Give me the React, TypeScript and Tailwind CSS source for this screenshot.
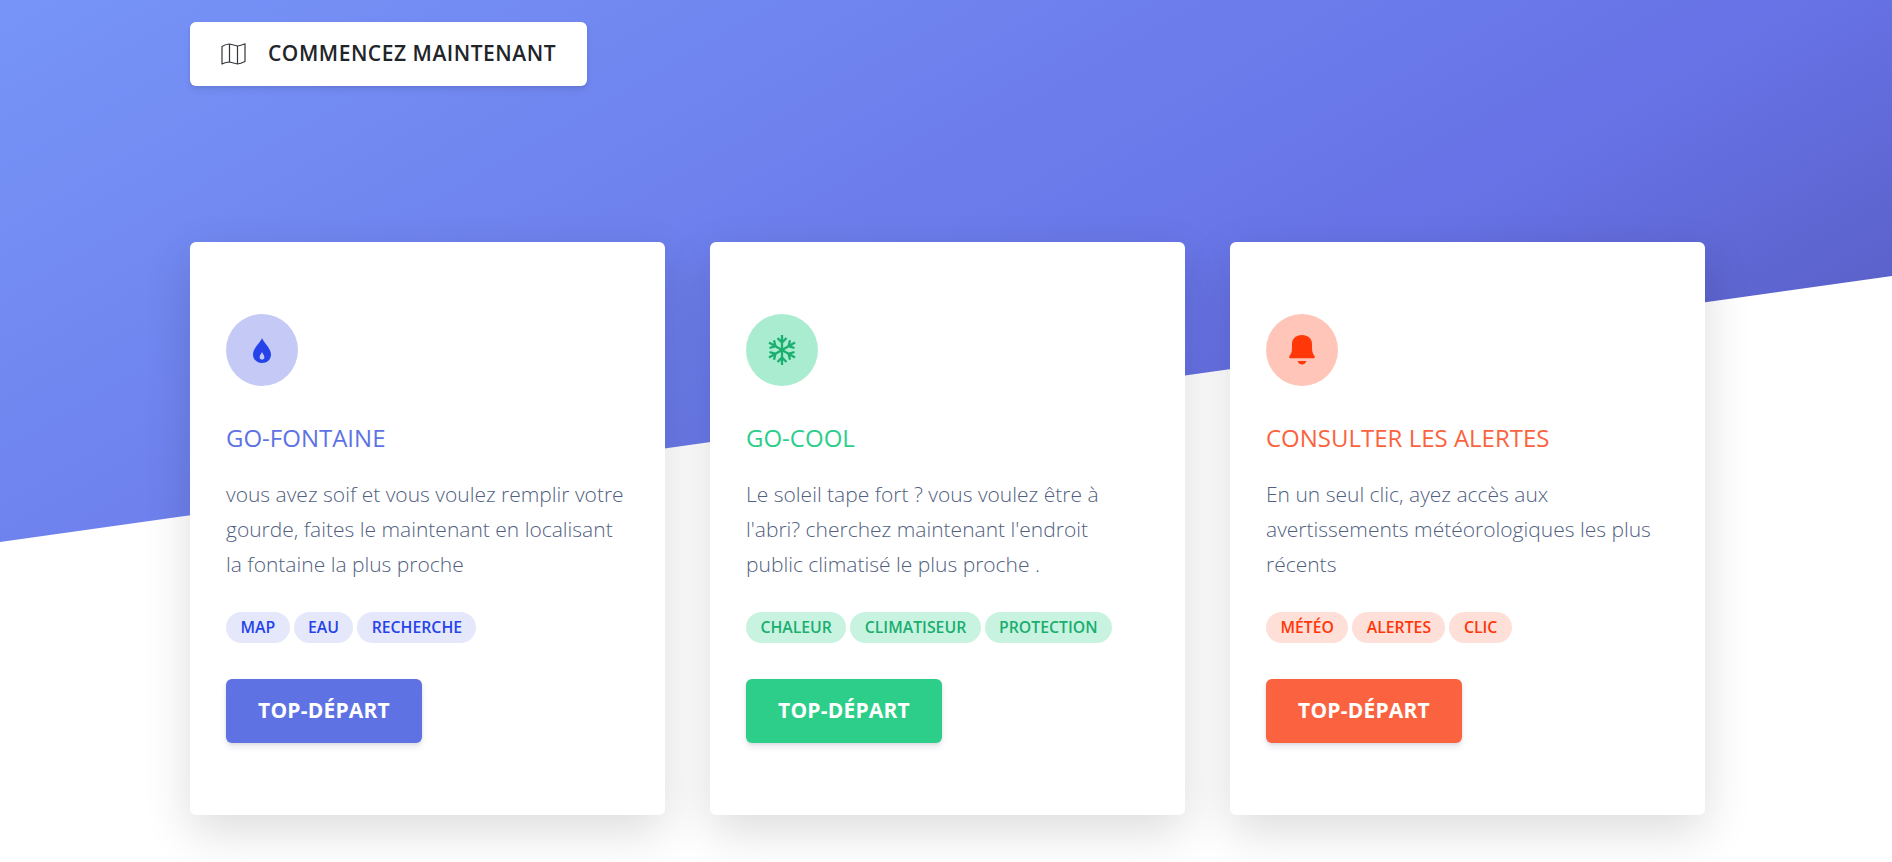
const cards = [
  {
    title: "GO-FONTAINE",
    text: "vous avez soif et vous voulez remplir votre gourde, faites le maintenant en localisant la fontaine la plus proche",
    tags: ["MAP", "EAU", "RECHERCHE"],
    titleClass: "text-[#5e72e4]",
    iconClass: "bg-[#c4caf5] text-[#2643e9]",
    tagClass: "bg-[#e5e8fb] text-[#2643e9]",
    buttonClass: "bg-[#5e72e4]",
    icon: <DropIcon />,
  },
  {
    title: "GO-COOL",
    text: "Le soleil tape fort ? vous voulez être à l'abri? cherchez maintenant l'endroit public climatisé le plus proche .",
    tags: ["CHALEUR", "CLIMATISEUR", "PROTECTION"],
    titleClass: "text-[#2dce89]",
    iconClass: "bg-[#aaecd0] text-[#1aae6f]",
    tagClass: "bg-[#c9f3e1] text-[#1aae6f]",
    buttonClass: "bg-[#2dce89]",
    icon: <SnowIcon />,
  },
  {
    title: "CONSULTER LES ALERTES",
    text: "En un seul clic, ayez accès aux avertissements météorologiques les plus récents",
    tags: ["MÉTÉO", "ALERTES", "CLIC"],
    titleClass: "text-[#fb6340]",
    iconClass: "bg-[#fec5b8] text-[#ff3709]",
    tagClass: "bg-[#fee0d9] text-[#ff3709]",
    buttonClass: "bg-[#fb6340]",
    icon: <BellIcon />,
  },
];

function MapIcon() {
  return (
    <svg width="25" height="22" viewBox="0 0 25 22" fill="none" stroke="#32363b" strokeWidth="1.2" strokeLinejoin="round">
      <path d="M1 3.5 C4 1.5 6 1 8.5 1 L16.5 3 C19 3 21 2 24 .8 V18.5 C21 20 19 20.8 16.5 21 L8.5 19 C6 19 4 19.5 1 21 Z" />
      <path d="M8.5 1 V19 M16.5 3 V21" />
    </svg>
  );
}

function DropIcon() {
  return (
    <svg width="18" height="25" viewBox="0 0 18 25">
      <path
        fillRule="evenodd"
        fill="currentColor"
        d="M9 0 C10 4 18 10 18 16.5 C18 21.5 14 25 9 25 C4 25 0 21.5 0 16.5 C0 10 8 4 9 0 Z M9 14 C8 16 6.6 17.5 6.6 19.2 C6.6 20.6 7.7 21.6 9 21.6 C10.3 21.6 11.4 20.6 11.4 19.2 C11.4 17.5 10 16 9 14 Z"
      />
    </svg>
  );
}

function SnowIcon() {
  return (
    <svg width="28" height="30" viewBox="0 0 28 30" fill="none" stroke="currentColor" strokeWidth="2.3">
      <path d="M14 15 V0 M9.5 3 L14 7.5 L18.5 3" />
      <path d="M14 15 V30 M9.5 27 L14 22.5 L18.5 27" />
      <path d="M14 15 L1 7.5 M1.5 13 L7.5 11.2 L6 5.2" />
      <path d="M14 15 L27 7.5 M26.5 13 L20.5 11.2 L22 5.2" />
      <path d="M14 15 L1 22.5 M1.5 17 L7.5 18.8 L6 24.8" />
      <path d="M14 15 L27 22.5 M26.5 17 L20.5 18.8 L22 24.8" />
    </svg>
  );
}

function BellIcon() {
  return (
    <svg width="26" height="30" viewBox="0 0 26 30" fill="currentColor">
      <path d="M13 0 C19 0 23 3.500 23 9 V13 C23 17 24 19 25.500 21 C26.300 22.300 25.500 23.300 24.300 23.300 H1.700 C.5 23.300 -.3 22.300 .5 21 C2 19 3 17 3 13 V9 C3 3.500 7 0 13 0 Z" />
      <path d="M8.5 26 H17.5 C16.5 28.4 15 29.5 13 29.5 C11 29.5 9.500 28.400 8.500 26 Z" />
    </svg>
  );
}

export default function App() {
  return (
    <div className="relative h-[862px] overflow-hidden bg-white font-['Open_Sans',sans-serif]">
      <div className="absolute inset-x-0 top-[-300px] h-[842px] bg-[linear-gradient(150deg,#7795f8_15%,#6772e5_70%,#555abf_94%)] [clip-path:polygon(0_0,100%_0,100%_576px,0_100%)]" />

      <div className="relative pl-[190px] pr-[187px] pt-[22px]">
        <button className="flex h-[64px] w-[397px] items-center gap-[22px] rounded-[6px] bg-white pl-[31px] text-[21px] font-semibold tracking-[0.025em] text-[#212529] shadow-[0_4px_6px_rgba(50,50,93,0.11),0_1px_3px_rgba(0,0,0,0.08)]">
          <MapIcon />
          COMMENCEZ MAINTENANT
        </button>

        <div className="mt-[156px] grid grid-cols-3 gap-[45px]">
          {cards.map((card) => (
            <div
              key={card.title}
              className="h-[573px] rounded-[6px] bg-white px-[36px] pt-[72px] shadow-[0_16px_48px_rgba(0,0,0,0.14)]"
            >
              <div className={`flex h-[72px] w-[72px] items-center justify-center rounded-full ${card.iconClass}`}>
                {card.icon}
              </div>
              <h6 className={`mt-[35px] text-[24px] leading-[34px] ${card.titleClass}`}>{card.title}</h6>
              <p className="mt-[22px] h-[105px] text-[21px] font-light leading-[35px] text-[#525f7f]">{card.text}</p>
              <div className="mt-[30px] flex gap-[4px]">
                {card.tags.map((tag) => (
                  <span
                    key={tag}
                    className={`flex h-[31px] items-center rounded-full px-[14.4px] text-[15.8px] font-semibold ${card.tagClass}`}
                  >
                    {tag}
                  </span>
                ))}
              </div>
              <button
                className={`mt-[36px] h-[64px] w-[196px] rounded-[6px] text-[21px] font-bold tracking-[0.01em] text-white shadow-[0_4px_6px_rgba(50,50,93,0.11),0_1px_3px_rgba(0,0,0,0.08)] ${card.buttonClass}`}
              >
                TOP-DÉPART
              </button>
            </div>
          ))}
        </div>
      </div>
    </div>
  );
}
